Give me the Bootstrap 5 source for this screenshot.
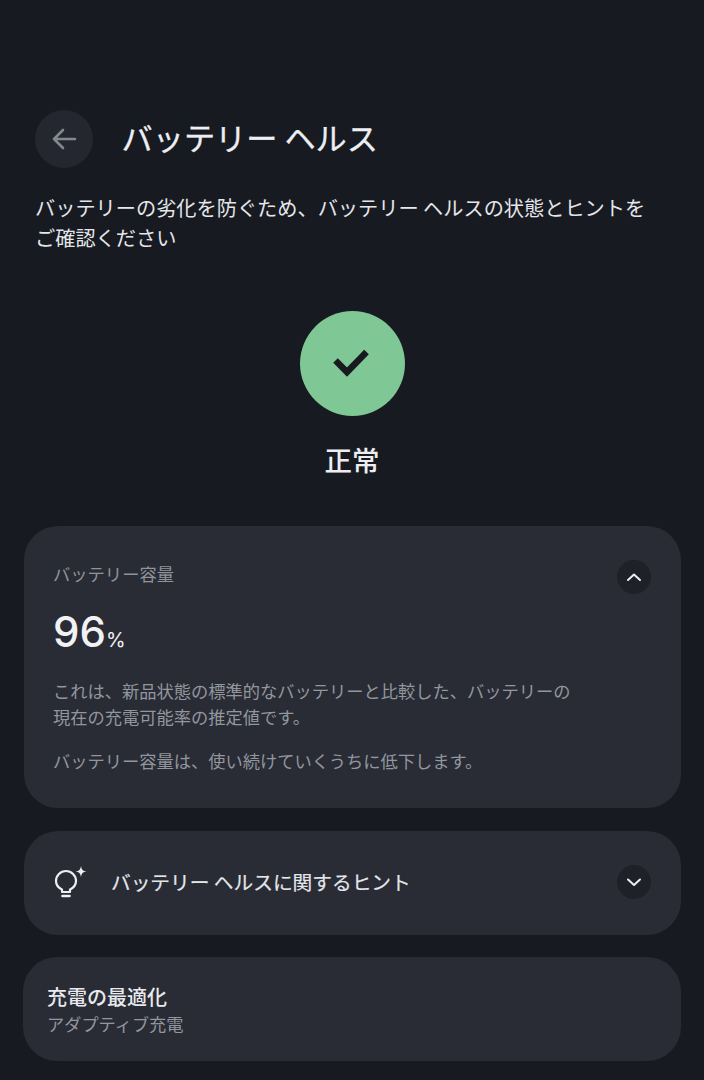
<!doctype html>
<html lang="ja"><head><meta charset="utf-8">
<link href="https://cdn.jsdelivr.net/npm/bootstrap@5.3.0/dist/css/bootstrap.min.css" rel="stylesheet">
<style>
html,body{height:1080px;overflow:hidden}
body{background:#171a20;color:#eef0f3;font-family:"Noto Sans CJK JP","Noto Sans",sans-serif}
.screen{padding:110px 23px 0;height:1080px}
.head-row{padding-left:12px;gap:28.500px;height:58px}
.back-btn{width:58px;height:58px;background:#24272f;border:0;padding:0}
.page-title{font-size:31.200px;font-weight:400;margin:-5px 0 0;line-height:1;color:#edeff2;-webkit-text-stroke:.3px #edeff2}
.intro{font-size:20.200px;line-height:29.500px;margin:25px 0 0;padding:0 12px;color:#e4e6ea;white-space:nowrap}
.state-wrap{margin-top:58.500px}
.ok-disc{width:105px;height:105px;background:#7fc794}
.state-label{font-size:27.500px;font-weight:500;line-height:1;margin-top:30px;color:#eceef1}
.panel{background:#292c35;border-radius:34px;color:#eceef1}
.panel-cap{height:282px;margin-top:53px;padding:33px 30px 0 29px;margin-left:1px}
.cap-label{font-size:17.300px;line-height:30px;color:#8f939b}
.round-ctl{width:34px;height:34px;background:#1e2128;flex:none}
.ctl-up{margin-top:1px}
.ctl-down{margin-top:-2px}
.big-num{font-family:"Inter",sans-serif;font-weight:500;font-size:42px;line-height:1;margin-top:17px;color:#f1f2f4}
.big-num span{font-size:20px;font-weight:400}
.cap-text{font-size:17.250px;line-height:25.500px;color:#92969e;margin:25px 0 0;white-space:nowrap}
.cap-text+.cap-text{margin-top:19px}
.panel-tip{height:104px;margin-top:23px;padding:0 30px;margin-left:1px}
.tip-text{font-size:19.700px;font-weight:400;margin-left:23px;padding-bottom:2px;color:#e4e6ea;-webkit-text-stroke:.2px #e4e6ea}
.panel-opt{height:104px;margin-top:22px;padding:26px 24px 0}
.opt-title{font-size:20px;line-height:28px;font-weight:500;color:#e8eaee}
.opt-sub{font-size:17.200px;line-height:26px;color:#92969e}
</style></head>
<body>
<div class="screen">
<div class="d-flex align-items-center head-row">
<button class="back-btn rounded-circle d-flex align-items-center justify-content-center" aria-label="戻る"><svg width="28" height="28" viewBox="0 0 28 28" fill="none" stroke="#83878e" stroke-width="2.600" stroke-linecap="round" stroke-linejoin="round"><path d="M25 14H4M13 5l-9 9 9 9"/></svg></button>
<h1 class="page-title">バッテリー ヘルス</h1>
</div>
<p class="intro">バッテリーの劣化を防ぐため、バッテリー ヘルスの状態とヒントを<br>ご確認ください</p>
<div class="state-wrap d-flex flex-column align-items-center">
<div class="ok-disc rounded-circle d-flex align-items-center justify-content-center"><svg width="40" height="32" viewBox="0 0 40 32" fill="none" stroke="#171a20" stroke-width="6.500" stroke-linejoin="miter"><path d="M3.500 13.500L15 25 34.500 5"/></svg></div>
<div class="state-label">正常</div>
</div>
<section class="panel panel-cap">
<div class="d-flex justify-content-between align-items-start"><div class="cap-label">バッテリー容量</div><div class="round-ctl ctl-up rounded-circle d-flex align-items-center justify-content-center"><svg width="16" height="16" viewBox="0 0 16 16" fill="none" stroke="#eceef1" stroke-width="2" stroke-linecap="round" stroke-linejoin="round"><path d="M2 11L8 5.500l6 5.500"/></svg></div></div>
<div class="big-num">96<span>%</span></div>
<p class="cap-text">これは、新品状態の標準的なバッテリーと比較した、バッテリーの<br>現在の充電可能率の推定値です。</p>
<p class="cap-text">バッテリー容量は、使い続けていくうちに低下します。</p>
</section>
<section class="panel panel-tip d-flex align-items-center">
<svg width="34" height="34" viewBox="0 0 34 34" fill="none" stroke="#eceef1" stroke-width="2.200" stroke-linecap="round" stroke-linejoin="round"><path d="M16 23.500v2.500H8v-2.500C4.500 21.800 2 18.600 2 15a10 10 0 0 1 20 0c0 3.600-2.500 6.800-6 8.500z"/><path d="M8.500 30h7" stroke-width="2.600"/><path d="M27 0c.6 3.700 1.800 5 5.500 5.500-3.700.6-4.900 1.800-5.500 5.500-.6-3.700-1.800-4.900-5.500-5.500C25.200 5 26.400 3.700 27 0z" fill="#eceef1" stroke="none"/></svg>
<div class="tip-text flex-grow-1">バッテリー ヘルスに関するヒント</div>
<div class="round-ctl ctl-down rounded-circle d-flex align-items-center justify-content-center"><svg width="16" height="16" viewBox="0 0 16 16" fill="none" stroke="#eceef1" stroke-width="2" stroke-linecap="round" stroke-linejoin="round"><path d="M2 5.500L8 11l6-5.500"/></svg></div>
</section>
<section class="panel panel-opt">
<div class="opt-title">充電の最適化</div>
<div class="opt-sub">アダプティブ充電</div>
</section>
</div>
</body></html>
